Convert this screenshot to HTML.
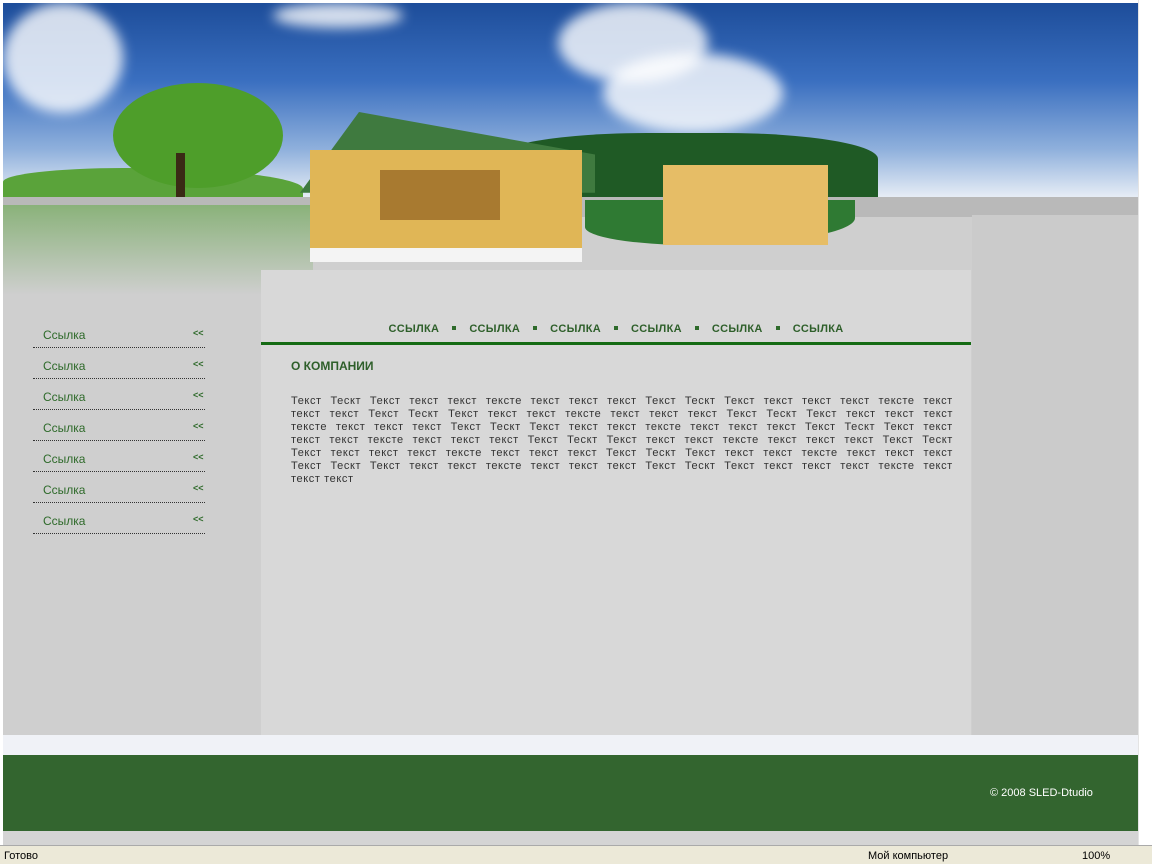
<!DOCTYPE html>
<html><head><meta charset="utf-8"><style>
*{margin:0;padding:0;box-sizing:border-box}
body{width:1152px;height:864px;overflow:hidden;background:#fff;font-family:"Liberation Sans",sans-serif;position:relative}
.abs{position:absolute}
#sky{left:3px;top:3px;width:1135px;height:195px;background:linear-gradient(180deg,#1d4d9a 0%,#3a6fc0 40%,#8fb0dc 75%,#e8eef6 100%);overflow:hidden}
.cl{position:absolute;background:#fff;border-radius:50%;filter:blur(6px);opacity:.8}
#gray{left:3px;top:197px;width:1135px;height:538px;background:#cfcfcf}
#center{left:261px;top:270px;width:710px;height:465px;background:#d8d8d8}
#right{left:972px;top:215px;width:166px;height:520px;background:#cbcbcb}
.menu a{position:absolute;left:43px;font-size:12px;color:#2e6a2a;text-decoration:none}
.menu .ln{position:absolute;left:33px;width:172px;border-top:1px dotted #333}
.menu .ar{position:absolute;left:193px;font-size:9px;color:#2e6a2a;font-weight:bold}
#nav{left:261px;top:323px;width:710px;text-align:center;font-size:11px;font-weight:bold;color:#2e5f2a;letter-spacing:.3px}
#nav span.d{display:inline-block;width:4px;height:4px;background:#2e6a2a;margin:0 13px 2px}
#bar{left:261px;top:342px;width:710px;height:3px;background:#156b14}
#h{left:291px;top:359px;font-size:12px;font-weight:bold;color:#2e5f2a}
#p{left:291px;top:395px;width:662px;font-size:11px;line-height:13px;color:#333;letter-spacing:.6px}
#p div{white-space:nowrap;display:flex;justify-content:space-between}
#p div.l{display:block}
#strip{left:3px;top:735px;width:1135px;height:20px;background:#f0f2f7}
#foot{left:3px;top:755px;width:1135px;height:76px;background:#33652f}
#copy{left:990px;top:787px;font-size:11px;color:#fff}
#bot{left:3px;top:831px;width:1135px;height:14px;background:#d4d4d4}
#sb{left:1138px;top:0;width:14px;height:845px;background:#fff;border-left:1px solid #e4e4e4}
#status{left:0;top:845px;width:1152px;height:19px;background:#ece9d8;border-top:1px solid #aaa;font-size:11px;color:#000}
</style></head><body>
<div class="abs" id="sky">
 <div class="cl" style="left:0;top:0;width:120px;height:110px"></div>
 <div class="cl" style="left:555px;top:0;width:150px;height:80px"></div>
 <div class="cl" style="left:600px;top:50px;width:180px;height:80px"></div>
 <div class="cl" style="left:270px;top:0;width:130px;height:25px"></div>
 <div class="abs" style="left:0;top:165px;width:300px;height:35px;background:#5aa33a;border-radius:40% 60% 0 0"></div>
 <div class="abs" style="left:490px;top:130px;width:385px;height:65px;background:#1f5a25;border-radius:40% 40% 0 0"></div>
 <div class="abs" style="left:110px;top:80px;width:170px;height:105px;background:#4e9e2a;border-radius:50%"></div>
 <div class="abs" style="left:173px;top:150px;width:9px;height:45px;background:#3a2a15"></div>
</div>
<div class="abs" id="gray"></div>
<div class="abs" style="left:3px;top:197px;width:1135px;height:20px;background:#b9b9b9"></div>
<div class="abs" style="left:3px;top:205px;width:310px;height:90px;background:linear-gradient(#8ab27a,#cfcfcf)"></div>
<div class="abs" id="center"></div>
<div class="abs" id="right"></div>
<div class="abs" style="left:300px;top:112px;width:295px;height:85px;background:#3f7a3f;clip-path:polygon(20% 0,100% 50%,100% 95%,0 95%)"></div>
<div class="abs" style="left:310px;top:150px;width:272px;height:110px;background:#e0b656"></div>
<div class="abs" style="left:380px;top:170px;width:120px;height:50px;background:#a87a30"></div>
<div class="abs" style="left:310px;top:248px;width:272px;height:14px;background:#f4f4f4"></div>
<div class="abs" style="left:585px;top:200px;width:270px;height:45px;background:#2f7a33;border-radius:0 0 60% 40%"></div>
<div class="abs" style="left:663px;top:165px;width:165px;height:80px;background:#e6bd66"></div>
<div class="menu">
 <a style="top:328px">Ссылка</a><span class="ar" style="top:328px">&lt;&lt;</span><div class="ln" style="top:347px"></div>
 <a style="top:359px">Ссылка</a><span class="ar" style="top:359px">&lt;&lt;</span><div class="ln" style="top:378px"></div>
 <a style="top:390px">Ссылка</a><span class="ar" style="top:390px">&lt;&lt;</span><div class="ln" style="top:409px"></div>
 <a style="top:421px">Ссылка</a><span class="ar" style="top:421px">&lt;&lt;</span><div class="ln" style="top:440px"></div>
 <a style="top:452px">Ссылка</a><span class="ar" style="top:452px">&lt;&lt;</span><div class="ln" style="top:471px"></div>
 <a style="top:483px">Ссылка</a><span class="ar" style="top:483px">&lt;&lt;</span><div class="ln" style="top:502px"></div>
 <a style="top:514px">Ссылка</a><span class="ar" style="top:514px">&lt;&lt;</span><div class="ln" style="top:533px"></div>
</div>
<div class="abs" id="nav">ССЫЛКА<span class="d"></span>ССЫЛКА<span class="d"></span>ССЫЛКА<span class="d"></span>ССЫЛКА<span class="d"></span>ССЫЛКА<span class="d"></span>ССЫЛКА</div>
<div class="abs" id="bar"></div>
<div class="abs" id="h">О КОМПАНИИ</div>
<div class="abs" id="p">
<div><span>Текст</span><span>Тескт</span><span>Текст</span><span>текст</span><span>текст</span><span>тексте</span><span>текст</span><span>текст</span><span>текст</span><span>Текст</span><span>Тескт</span><span>Текст</span><span>текст</span><span>текст</span><span>текст</span><span>тексте</span><span>текст</span></div>
<div><span>текст</span><span>текст</span><span>Текст</span><span>Тескт</span><span>Текст</span><span>текст</span><span>текст</span><span>тексте</span><span>текст</span><span>текст</span><span>текст</span><span>Текст</span><span>Тескт</span><span>Текст</span><span>текст</span><span>текст</span><span>текст</span></div>
<div><span>тексте</span><span>текст</span><span>текст</span><span>текст</span><span>Текст</span><span>Тескт</span><span>Текст</span><span>текст</span><span>текст</span><span>тексте</span><span>текст</span><span>текст</span><span>текст</span><span>Текст</span><span>Тескт</span><span>Текст</span><span>текст</span></div>
<div><span>текст</span><span>текст</span><span>тексте</span><span>текст</span><span>текст</span><span>текст</span><span>Текст</span><span>Тескт</span><span>Текст</span><span>текст</span><span>текст</span><span>тексте</span><span>текст</span><span>текст</span><span>текст</span><span>Текст</span><span>Тескт</span></div>
<div><span>Текст</span><span>текст</span><span>текст</span><span>текст</span><span>тексте</span><span>текст</span><span>текст</span><span>текст</span><span>Текст</span><span>Тескт</span><span>Текст</span><span>текст</span><span>текст</span><span>тексте</span><span>текст</span><span>текст</span><span>текст</span></div>
<div><span>Текст</span><span>Тескт</span><span>Текст</span><span>текст</span><span>текст</span><span>тексте</span><span>текст</span><span>текст</span><span>текст</span><span>Текст</span><span>Тескт</span><span>Текст</span><span>текст</span><span>текст</span><span>текст</span><span>тексте</span><span>текст</span></div>
<div class="l">текст текст</div>
</div>
<div class="abs" id="strip"></div>
<div class="abs" id="foot"></div>
<div class="abs" id="copy">© 2008 SLED-Dtudio</div>
<div class="abs" id="bot"></div>
<div class="abs" id="sb"></div>
<div class="abs" id="status"><span class="abs" style="left:4px;top:4px">Готово</span><span class="abs" style="left:868px;top:4px">Мой компьютер</span><span class="abs" style="left:1082px;top:4px">100%</span></div>
</body></html>
